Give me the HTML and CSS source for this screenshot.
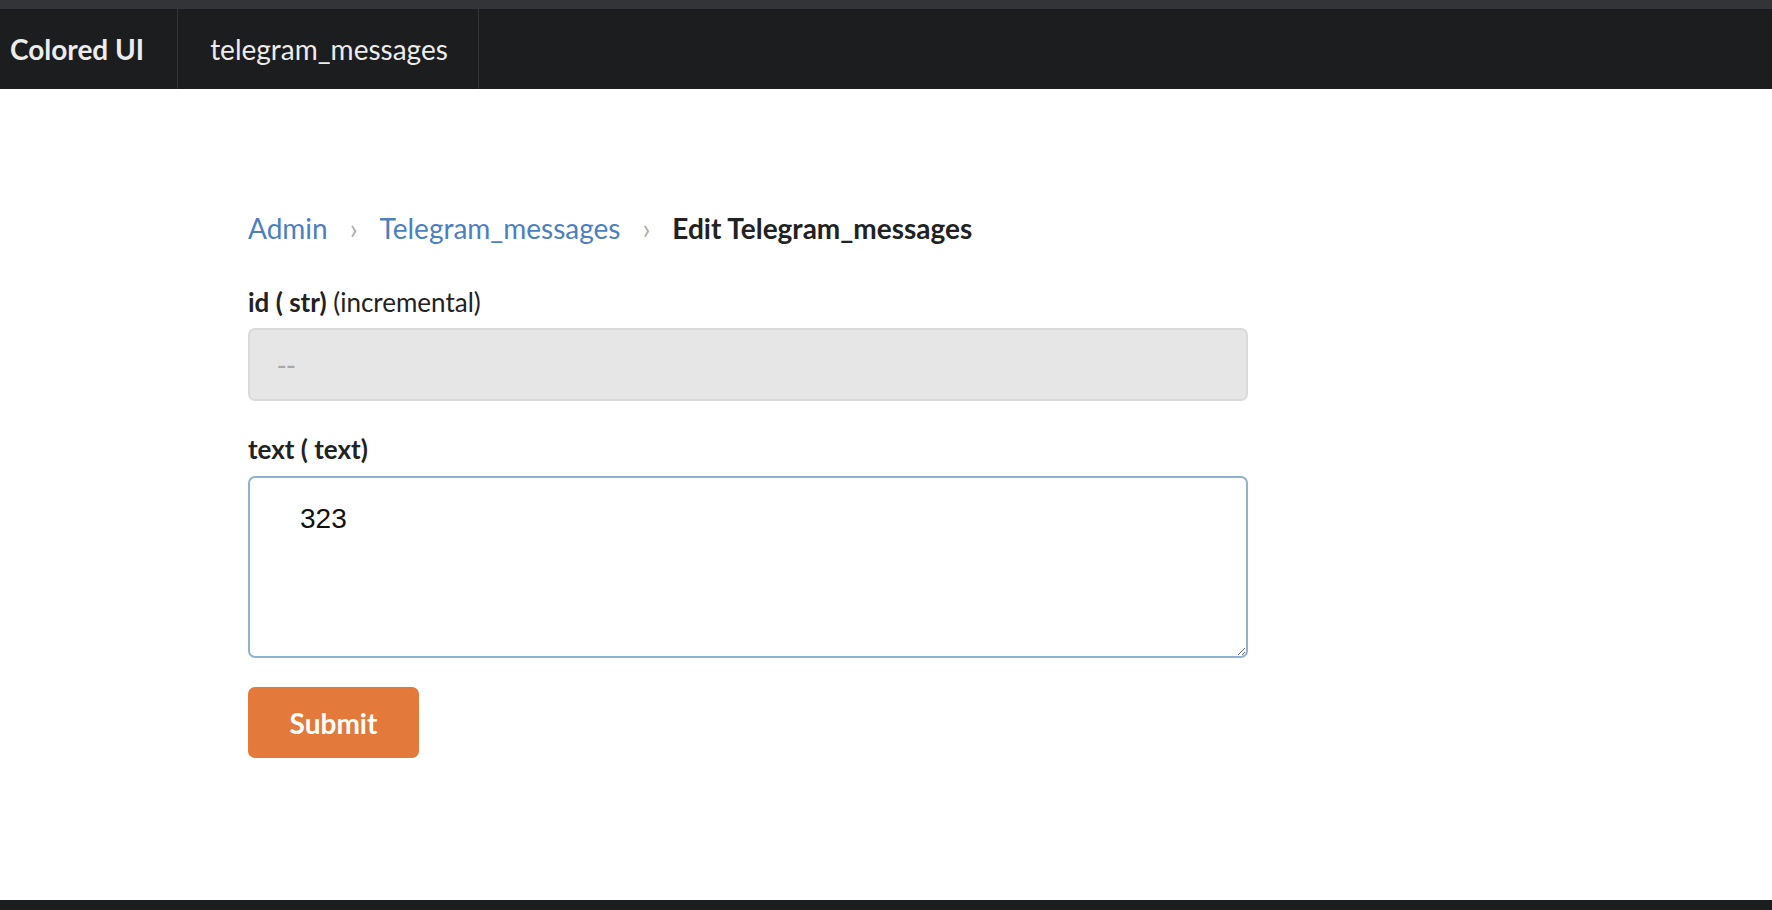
FILE: index.html
```html
<!DOCTYPE html>
<html lang="en">
<head>
<meta charset="utf-8">
<title>Edit Telegram_messages</title>
<link rel="stylesheet" href="styles.css">
</head>
<body>
<div class="page">
  <div class="topstrip"></div>
  <nav class="nav">
    <a class="nav-item brand" href="#">Colored UI</a>
    <a class="nav-item" href="#">telegram_messages</a>
  </nav>
  <main class="main">
    <div class="breadcrumb">
      <a href="#" class="crumb-link">Admin</a>
      <span class="crumb-sep">›</span>
      <a href="#" class="crumb-link">Telegram_messages</a>
      <span class="crumb-sep">›</span>
      <span class="crumb-current">Edit Telegram_messages</span>
    </div>
    <form class="form">
      <div class="field">
        <label class="label"><b>id ( str)</b> (incremental)</label>
        <input class="input" type="text" placeholder="--" disabled>
      </div>
      <div class="field">
        <label class="label"><b>text ( text)</b></label>
        <textarea class="textarea">323</textarea>
      </div>
      <button class="submit" type="button">Submit</button>
    </form>
  </main>
  <footer class="footer"></footer>
</div>
</body>
</html>
```

FILE: styles.css
```css
html, body {
  margin: 0;
  padding: 0;
  background: #ffffff;
}

.page {
  display: flex;
  flex-direction: column;
  height: 910px;
  font-family: Lato, "Open Sans", sans-serif;
  color: #222222;
}

.topstrip {
  height: 9px;
  background: #333438;
}

.nav {
  display: flex;
  height: 80px;
  background: #1c1d1f;
}

.nav-item {
  display: flex;
  align-items: center;
  padding: 0 30px 0 32px;
  border-right: 1px solid #323335;
  color: #ececec;
  font-size: 28px;
  text-decoration: none;
}

.nav-item.brand {
  padding: 0 33px 0 10px;
  font-weight: 700;
}

.main {
  flex: 1;
  padding: 122px 0 0 248px;
}

.breadcrumb {
  display: flex;
  align-items: center;
  gap: 22px;
  height: 34px;
  font-size: 28px;
}

.crumb-link {
  color: #4b7fc2;
  text-decoration: none;
}

.crumb-sep {
  color: #b0b0b0;
  font-size: 28px;
}

.crumb-current {
  font-weight: 700;
  color: #222222;
}

.form {
  display: flex;
  flex-direction: column;
  width: 1000px;
  margin-top: 42px;
}

.field {
  display: flex;
  flex-direction: column;
}

.label {
  font-size: 26px;
  line-height: 30px;
  color: #222222;
}

.label b {
  font-weight: 700;
}

.input {
  box-sizing: border-box;
  width: 1000px;
  height: 73px;
  margin: 11px 0 33px;
  padding: 0 0 0 27px;
  border: 2px solid #dadada;
  border-radius: 7px;
  background: #e6e6e6;
  font-family: "Liberation Sans", Arial, sans-serif;
  font-size: 28px;
}

.input::placeholder {
  color: #a9a9a9;
}

.textarea {
  box-sizing: border-box;
  width: 1000px;
  height: 182px;
  margin: 12px 0 29px;
  padding: 24px 48px 20px 50px;
  border: 2px solid #8fb2d4;
  border-radius: 7px;
  outline: none;
  background: #ffffff;
  color: #111111;
  font-family: "Liberation Sans", Arial, sans-serif;
  font-size: 28px;
  line-height: 34px;
}

.submit {
  align-self: flex-start;
  width: 171px;
  height: 71px;
  border: none;
  border-radius: 7px;
  background: #e3793a;
  color: #ffffff;
  font-family: Lato, "Open Sans", sans-serif;
  font-size: 28px;
  font-weight: 700;
  cursor: pointer;
}

.footer {
  height: 10px;
  background: #1c1d1f;
}
```
